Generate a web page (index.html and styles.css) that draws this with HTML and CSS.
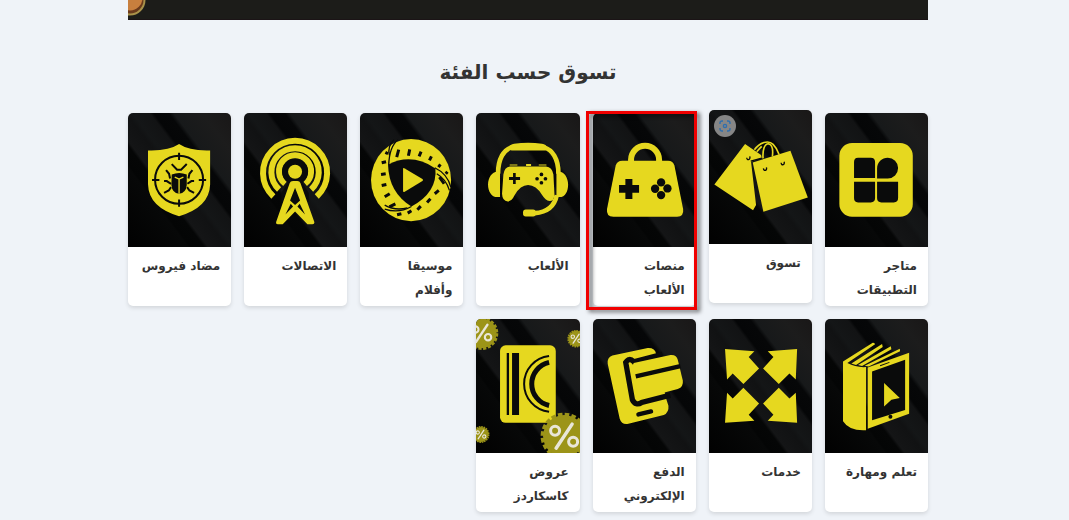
FILE: index.html
```html
<!DOCTYPE html>
<html lang="ar" dir="rtl">
<head>
    <meta charset="UTF-8">
    <meta name="viewport" content="width=device-width, initial-scale=1.0">
    <title>تسوق حسب الفئة</title>
    <link rel="stylesheet" href="styles.css">
</head>
<body>

    <div class="container">
        <!-- Banner -->
        <div class="banner">
            <svg class="banner-coin" viewBox="0 0 50 20" aria-hidden="true">
                <circle cx="2" cy="0" r="15.5" fill="#a8924a"/>
                <circle cx="2" cy="0" r="13.5" fill="#6b3a1c"/>
                <circle cx="2" cy="-2" r="12.5" fill="#c87f3e"/>
                <rect x="37" y="19" width="4" height="1" fill="#b5a56a"/>
            </svg>
        </div>

        <h2 class="title">تسوق حسب الفئة</h2>

        <!-- Categories -->
        <ul class="categories">
            <li class="category">
                <a class="card" href="#">
                    <svg class="cover" viewBox="375 24 309 402" aria-hidden="true">
                        <rect x="418" y="114" width="220" height="221" rx="38" class="fill"/>
                        <path class="hole" d="M474 158H512Q525 158 525 171V219H462V171Q462 158 474 158ZM563 158A31 31 0 0 1 563 220H531V190A32 32 0 0 1 563 158ZM462 230H525V279Q525 292 512 292H474Q462 292 462 279ZM531 230H594V279Q594 292 581 292H544Q531 292 531 279Z"/>
                    </svg>
                    <span class="name">متاجر التطبيقات</span>
                </a>
            </li>
            <li class="category raised">
                <a class="card" href="#">
                    <svg class="cover" viewBox="24 15 309 402" aria-hidden="true">
                        <path class="line" stroke-width="5" d="M160 134C176 112 202 104 216 118Q228 130 234 148M186 160C184 136 190 116 202 116C214 118 216 136 214 154M167 140L176 130L182 124"/>
                        <path class="fill" d="M132 117L180 150L182 158L150 170L165 300L156 315L40 238Z"/>
                        <path class="fill" d="M155 172L268 137L320 277L187 320Z"/>
                        <path class="dark-line" stroke-width="4" d="M149 168L182 159M137 158Q138 166 144 163Q148 161 146 154M187 190Q188 197 193 196Q198 194 196 187M240 173Q241 180 246 179Q251 177 249 170"/>
                    </svg>
                    <span class="name">تسوق</span>
                </a>
                <button class="lens" type="button" aria-label="بحث بالصورة">
                    <svg viewBox="0 0 12 12" aria-hidden="true">
                        <path d="M1 4V3A2 2 0 0 1 3 1H4M8 1H9A2 2 0 0 1 11 3V4M11 8V9A2 2 0 0 1 9 11H8M4 11H3A2 2 0 0 1 1 9V8"/>
                        <circle cx="6" cy="6" r="1.6"/>
                    </svg>
                </button>
            </li>
            <li class="category marked">
                <a class="card" href="#">
                    <svg class="cover" viewBox="36 24 309 402" aria-hidden="true">
                        <path class="line" stroke-width="18" d="M150 172V164A42 42 0 0 1 234 164V172"/>
                        <path class="fill" d="M124 167H261Q276 167 280 181L306 312Q309 335 288 335H97Q75 335 78 312L104 181Q108 167 124 167Z"/>
                        <path class="hole" d="M133 222H154V240H174V263H154V282H133V263H114V240H133Z"/>
                        <g class="hole">
                            <circle cx="240" cy="232" r="12.5"/><circle cx="222" cy="251" r="12.5"/>
                            <circle cx="259" cy="250" r="12.5"/><circle cx="240" cy="270" r="12.5"/>
                        </g>
                    </svg>
                    <span class="name">منصات الألعاب</span>
                </a>
            </li>
            <li class="category">
                <a class="card" href="#">
                    <svg class="cover" viewBox="372 24 309 402" aria-hidden="true">
                        <path class="line" stroke-width="14" d="M438 206C438 160 456 134 478 127H576C600 134 619 160 619 206M614 270Q604 320 548 324"/>
                        <path class="fill" d="M470 128Q474 117 486 116Q528 111 570 116Q582 117 586 128L580 136H478ZM444 200V276H436C418 276 408 258 408 238C408 218 420 200 436 200ZM613 200V276H622C640 276 648 258 648 238C648 218 636 200 622 200Z"/>
                        <rect class="fill" x="513" y="313" width="38" height="21" rx="8"/>
                        <path class="fill" d="M474 184H582Q600 186 604 208L607 268Q606 288 592 288Q580 286 570 270Q552 240 528 240Q505 240 488 270Q479 289 467 289Q451 288 450 266L454 208Q457 186 474 184ZM473 178H496V181H473ZM522 177H537V183H522ZM560 178H583V181H560Z"/>
                        <path class="hole" d="M483 204H491V216H504V225H491V237H483V225H471V216H483Z"/>
                        <g class="hole">
                            <circle cx="568" cy="208" r="5.5"/><circle cx="555" cy="221" r="5.5"/>
                            <circle cx="580" cy="221" r="5.5"/><circle cx="568" cy="233" r="5.5"/>
                        </g>
                    </svg>
                    <span class="name">الألعاب</span>
                </a>
            </li>
            <li class="category">
                <a class="card" href="#">
                    <svg class="cover" viewBox="24 24 309 402" aria-hidden="true">
                        <ellipse class="fill" cx="177" cy="225" rx="120" ry="123"/>
                        <path class="hole" d="M108 179Q178 142 250 190Q256 262 178 304Q110 262 108 179Z"/>
                        <path class="dark-line" stroke-width="4" d="M138 104Q112 124 110 180M248 188Q286 206 296 246M178 304Q140 326 98 312"/>
                        <path class="dark-line" stroke-width="4" d="M126 104Q106 122 112 150M254 206Q282 222 292 256M166 308Q130 318 98 300"/>
                        <path class="hole-line" d="M140 134L134 156M173 133L169 152M207 140L201 154M238 154L232 166M265 178L259 186M286 200L281 206M106 140L102 148M102 170L89 173M101 206L87 208M103 238L89 241M113 266L98 275M130 296L112 305M148 326L135 329M178 317L167 324M206 303L196 314M235 281L225 292M260 256L248 266M262 216L276 236"/>
                        <path class="fill" d="M153 191Q153 187 158 190L211 222Q215 225 211 228L158 260Q153 262 153 258Z"/>
                    </svg>
                    <span class="name">موسيقا وأفلام</span>
                </a>
            </li>
            <li class="category">
                <a class="card" href="#">
                    <svg class="cover" viewBox="372 24 309 402" aria-hidden="true">
                        <path class="line" stroke-width="18" d="M460 274A96 96 0 1 1 590 274"/>
                        <path class="line" stroke-width="18" d="M477 253A71 71 0 1 1 573 253"/>
                        <path class="line" stroke-width="18" d="M495 236A48 48 0 1 1 555 236"/>
                        <circle class="hole" cx="525" cy="200" r="39"/>
                        <path class="hole" d="M484 264L504 232H546L566 264V290H484Z"/>
                        <circle class="fill" cx="525" cy="200" r="21"/>
                        <path class="fill" d="M509 234Q511 228 519 228H532Q539 228 541 234L583 351Q583 357 577 357H562L525 319L488 357H473Q467 357 468 351Z"/>
                        <path class="hole" d="M525 248L540 286L525 300L510 286ZM512 296L519 304L496 328ZM539 296L532 304L555 328Z"/>
                    </svg>
                    <span class="name">الاتصالات</span>
                </a>
            </li>
            <li class="category">
                <a class="card" href="#">
                    <svg class="cover" viewBox="24 24 309 402" aria-hidden="true">
                        <path class="fill" d="M177 117Q208 138 270 136V238Q268 306 177 333Q86 306 84 238V136Q146 138 177 117Z"/>
                        <circle class="dark-line" cx="177" cy="224" r="72" stroke-width="6"/>
                        <path class="dark-line" stroke-width="6" d="M177 143V165M177 283V305M96 225H118M236 225H258"/>
                        <path class="dark-line" stroke-width="6" d="M155 177L171 194H183L200 177M138 195L147 206L150 220M217 195L208 206L205 220M132 228H140L153 236M222 228H214L202 236M132 263L146 256L153 246M222 263L208 256L201 246"/>
                        <path class="hole" d="M155 208Q177 199 200 208V240Q198 264 177 266Q156 264 154 240Z"/>
                        <path class="line" stroke-width="4" d="M164 216L177 222L190 216M177 222V266"/>
                    </svg>
                    <span class="name">مضاد فيروس</span>
                </a>
            </li>
            <li class="category">
                <a class="card" href="#">
                    <svg class="cover" viewBox="375 12 309 402" aria-hidden="true">
                        <path class="fill" d="M429 139L518 83Q524 82 525 88L442 144Q468 158 498 156V345Q448 348 429 318Z"/>
                        <path class="fill" d="M454 145L546 87L548 96L468 150ZM474 150L572 94L574 103L486 153ZM494 152L599 101L600 109L506 154Z"/>
                        <path class="fill" d="M503 157L627 113V296L503 341Z"/>
                        <path class="hole" d="M516 169L615 134V285L516 315Z"/>
                        <path class="dark-line" stroke-width="3" d="M540 152L568 142"/>
                        <circle class="hole" cx="571" cy="305" r="6"/>
                        <path class="fill" d="M552 204L599 249L574 254L552 274Z"/>
                    </svg>
                    <span class="name">تعلم ومهارة</span>
                </a>
            </li>
            <li class="category">
                <a class="card" href="#">
                    <svg class="cover" viewBox="24 12 309 402" aria-hidden="true">
                        <path class="fill" d="M72 102L160 109L143 126L174 160L127 207L95 175L78 193Z"/>
                        <path class="fill" d="M288 102L200 109L217 126L186 160L233 207L265 175L284 193Z"/>
                        <path class="fill" d="M72 323L160 317L143 299L174 265L127 218L95 250L78 233Z"/>
                        <path class="fill" d="M288 323L200 317L217 299L186 265L233 218L265 250L284 233Z"/>
                    </svg>
                    <span class="name">خدمات</span>
                </a>
            </li>
            <li class="category">
                <a class="card" href="#">
                    <svg class="cover" viewBox="366 12 309 402" aria-hidden="true">
                        <path class="fill" d="M424 121L530 99Q552 98 555 116L585 250L592 272Q594 292 578 300L472 326Q452 330 446 311L410 146Q408 126 424 121Z"/>
                        <path class="dark-line" stroke-width="16" d="M574 118L488 140Q474 126 464 142L484 254Q494 274 512 262L598 240"/>
                        <path class="fill" d="M488 144L598 120Q616 118 620 134L635 196Q638 214 620 222L512 250Q500 246 498 236L484 154Z"/>
                        <path class="dark-line" stroke-width="13" d="M494 184L628 153"/>
                        <path class="dark-line round" stroke-width="13" d="M502 298L540 289"/>
                    </svg>
                    <span class="name">الدفع الإلكتروني</span>
                </a>
            </li>
            <li class="category">
                <a class="card" href="#">
                    <svg class="cover" viewBox="18 12 309 402" aria-hidden="true">
                        <defs>
                            <symbol id="percent" viewBox="-50 -50 100 100">
                                <circle r="42" fill="#9c9418"/>
                                <circle r="43" fill="none" stroke="#9c9418" stroke-width="8" stroke-dasharray="9 4.5"/>
                                <path d="M16 -24L-16 24" stroke="#e9e6d8" stroke-width="7" stroke-linecap="round"/>
                                <circle cx="-18" cy="-11" r="9" fill="none" stroke="#e9e6d8" stroke-width="6"/>
                                <circle cx="18" cy="11" r="9" fill="none" stroke="#e9e6d8" stroke-width="6"/>
                            </symbol>
                        </defs>
                        <rect class="fill" x="90" y="91" width="167" height="232" rx="17"/>
                        <path class="hole" d="M110 114H117V300H110ZM126 114H147V300H126Z"/>
                        <path class="dark-line" stroke-width="6" d="M237 123A84 84 0 0 0 237 290"/>
                        <path class="dark-line" stroke-width="15" d="M237 142A66 66 0 0 0 237 271"/>
                        <use href="#percent" x="-18" y="2" width="106" height="106"/>
                        <use href="#percent" x="290" y="43" width="56" height="56"/>
                        <use href="#percent" x="6" y="331" width="54" height="54"/>
                        <use class="soft" href="#percent" x="192" y="288" width="180" height="150"/>
                    </svg>
                    <span class="name">عروض كاسكاردز</span>
                </a>
            </li>
        </ul>
    </div>

</body>
</html>
```

FILE: styles.css
```css
* {
    box-sizing: border-box;
}

body {
    font-family: "DejaVu Sans", "Noto Sans", sans-serif;
    background-color: #eff3f8;
    color: #333;
    margin: 0;
    padding-right: 13px;
}

.container {
    max-width: 800px;
    margin: 0 auto;
}

.banner {
    height: 20px;
    background-color: #1c1c19;
    border-bottom: 1px solid #1b1416;
    overflow: hidden;
    direction: ltr;
}

.banner-coin {
    display: block;
    width: 50px;
    height: 20px;
}

.title {
    margin: 32px 0 20px;
    font-size: 20px;
    line-height: 41px;
    font-weight: bold;
    text-align: center;
}

.categories {
    display: grid;
    grid-template-columns: repeat(7, 1fr);
    gap: 13px;
    list-style: none;
    margin: 0;
    padding: 0 0 8px;
}

.category {
    position: relative;
}

.card {
    display: flex;
    flex-direction: column;
    height: 100%;
    background-color: #fff;
    border-radius: 5px;
    overflow: hidden;
    box-shadow: 0 2px 4px rgba(0, 0, 0, 0.12);
    color: #333;
    text-decoration: none;
}

.cover {
    display: block;
    width: 100%;
    background: linear-gradient(53deg, #010101 0, #070808 48px, #040505 50px, #050606 61px, #141516 64px, #111213 79px, #141617 84px, #121314 98px, #050607 101px, #060708 113px, #17191a 117px, #1c1c1c 140px, #191717 163px);
}

.name {
    min-height: 59px;
    padding: 7px 11px 4px;
    font-size: 12px;
    line-height: 24px;
    font-weight: bold;
}

.raised {
    transform: translateY(-3px);
}

/* red frame over the highlighted category */
.marked::after {
    content: "";
    position: absolute;
    inset: -2px -1px -4px -7px;
    border: 3px solid #f00000;
    filter: drop-shadow(3px 2px 2px rgba(0, 0, 0, 0.6));
    pointer-events: none;
}

.lens {
    position: absolute;
    top: 5px;
    left: 5px;
    display: flex;
    align-items: center;
    justify-content: center;
    width: 22px;
    height: 22px;
    padding: 0;
    border: none;
    border-radius: 50%;
    background-color: #868686;
    cursor: pointer;
}

.lens svg {
    width: 12px;
    height: 12px;
    fill: none;
    stroke: #2f6fae;
    stroke-width: 1.4;
}

.fill {
    fill: #e6d81f;
}

.hole {
    fill: #0a0b0b;
}

.line {
    fill: none;
    stroke: #e6d81f;
}

.dark-line {
    fill: none;
    stroke: #0a0b0b;
}

.hole-line {
    fill: none;
    stroke: #0a0b0b;
    stroke-width: 9;
}

.round {
    stroke-linecap: round;
}

.soft {
    filter: blur(2px);
}
```
